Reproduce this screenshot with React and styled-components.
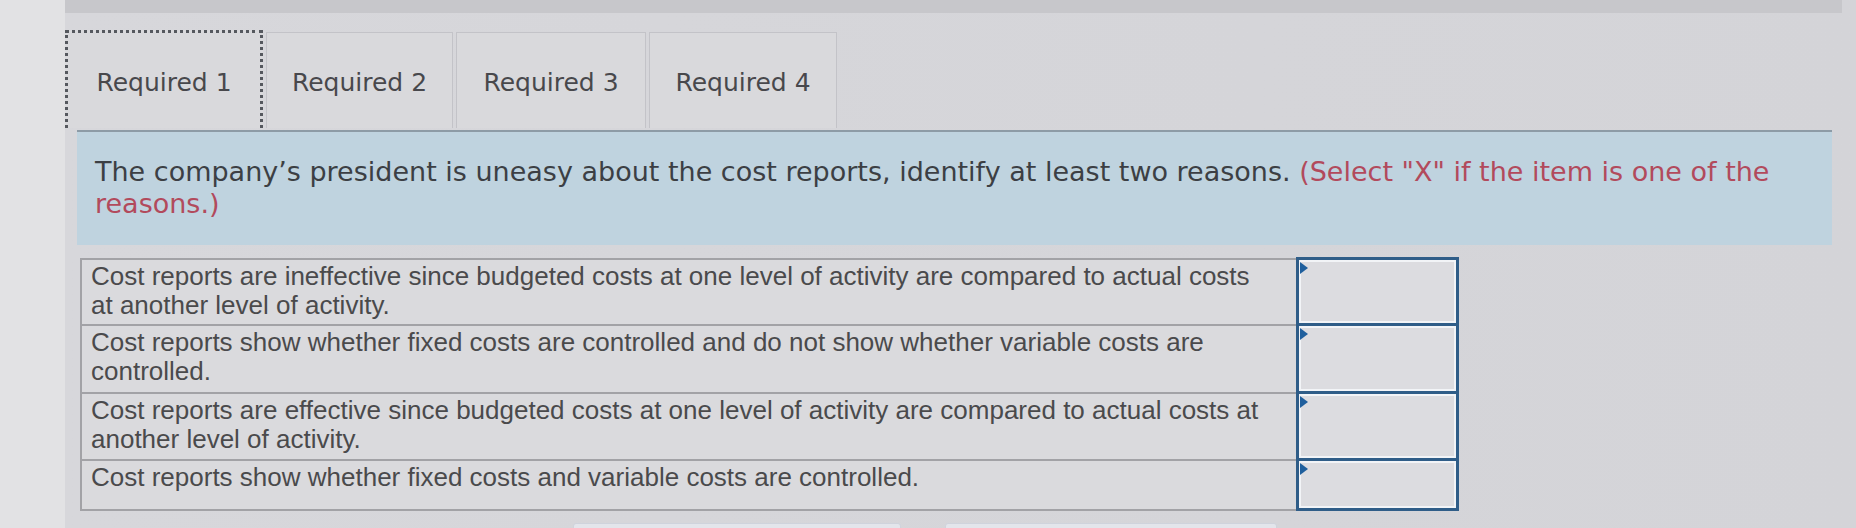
import React from 'react';
import styled, { createGlobalStyle } from 'styled-components';

const GlobalStyle = createGlobalStyle`
  html, body {
    margin: 0;
    padding: 0;
    height: 528px;
    overflow: hidden;
  }
  body {
    background: linear-gradient(90deg, #e2e2e4 0px, #e2e2e4 65px, #d7d7db 65px, #d4d4d8 100%);
  }
`;

const Page = styled.div`
  display: flex;
  flex-direction: column;
  padding-left: 65px;
  box-sizing: border-box;

  & > * {
    flex-shrink: 0;
  }
`;

const TopBar = styled.div`
  height: 13px;
  margin-right: 14px;
  background: #c7c7cb;
`;

const TabRow = styled.div`
  display: flex;
  align-items: flex-end;
  gap: 3px;
  margin-top: 17px;
  height: 98px;
`;

const Tab = styled.div`
  display: flex;
  align-items: center;
  justify-content: center;
  box-sizing: border-box;
  width: ${props => props.$width || 188}px;
  height: ${props => (props.$active ? 98 : 96)}px;
  padding-top: 4px;
  background: #d9d9dc;
  border: ${props => (props.$active ? '3px dotted #55585e' : '1px solid #c3c3c8')};
  border-bottom: none;
  font-family: "DejaVu Sans", Verdana, sans-serif;
  font-size: 25px;
  color: #48484c;
`;

const Panel = styled.div`
  box-sizing: border-box;
  height: 115px;
  margin: 2px 24px 0 12px;
  padding: 24px 18px 0 18px;
  background: #bfd3df;
  border-top: 2px solid #8d9ba6;
  font-family: "DejaVu Sans", Verdana, sans-serif;
  font-size: 27px;
  line-height: 32px;
  color: #3c3f44;
`;

const Hint = styled.span`
  color: #b24a5c;
`;

const Table = styled.table`
  table-layout: fixed;
  width: 1376px;
  margin: 12px 0 0 15px;
  border-collapse: collapse;
  font-family: "Liberation Sans", Arial, sans-serif;
  font-size: 26px;
  line-height: 29px;
  color: #4a4a4c;
`;

const Row = styled.tr`
  height: ${props => props.$height}px;
`;

const TextCell = styled.td`
  box-sizing: border-box;
  padding: 2px 30px 2px 9px;
  vertical-align: top;
  border: 2px solid #a2a2a6;
  background: #dadadd;
`;

const SelectCell = styled.td`
  position: relative;
  box-sizing: border-box;
  padding: 0;
  border: 3px solid #2f5d88;
  background: #dcdce0;
  box-shadow: inset 0 0 0 2px #f2f4f7;

  &::before {
    content: "";
    position: absolute;
    left: 1px;
    top: 2px;
    border-top: 6px solid transparent;
    border-bottom: 6px solid transparent;
    border-left: 8px solid #1f5f9d;
  }
`;

const ButtonRow = styled.div`
  display: flex;
  gap: 44px;
  margin: 12px 0 0 508px;
`;

const FooterButton = styled.div`
  width: ${props => props.$width}px;
  height: 20px;
  background: #e3e5eb;
  border: 1px solid #cfd3dc;
  border-radius: 3px 3px 0 0;
`;

const rows = [
  {
    text: 'Cost reports are ineffective since budgeted costs at one level of activity are compared to actual costs at another level of activity.',
    height: 66,
  },
  {
    text: 'Cost reports show whether fixed costs are controlled and do not show whether variable costs are controlled.',
    height: 68,
  },
  {
    text: 'Cost reports are effective since budgeted costs at one level of activity are compared to actual costs at another level of activity.',
    height: 67,
  },
  {
    text: 'Cost reports show whether fixed costs and variable costs are controlled.',
    height: 50,
  },
];

export default function App() {
  return (
    <>
      <GlobalStyle />
      <Page>
        <TopBar />
        <TabRow>
          <Tab $active $width={198}>Required 1</Tab>
          <Tab $width={187}>Required 2</Tab>
          <Tab $width={190}>Required 3</Tab>
          <Tab $width={188}>Required 4</Tab>
        </TabRow>
        <Panel>
          The company’s president is uneasy about the cost reports, identify at least two reasons.{' '}
          <Hint>(Select "X" if the item is one of the reasons.)</Hint>
        </Panel>
        <Table>
          <colgroup>
            <col style={{ width: 1216 }} />
            <col style={{ width: 160 }} />
          </colgroup>
          <tbody>
            {rows.map(row => (
              <Row key={row.text} $height={row.height}>
                <TextCell>{row.text}</TextCell>
                <SelectCell />
              </Row>
            ))}
          </tbody>
        </Table>
        <ButtonRow>
          <FooterButton $width={326} />
          <FooterButton $width={330} />
        </ButtonRow>
      </Page>
    </>
  );
}
